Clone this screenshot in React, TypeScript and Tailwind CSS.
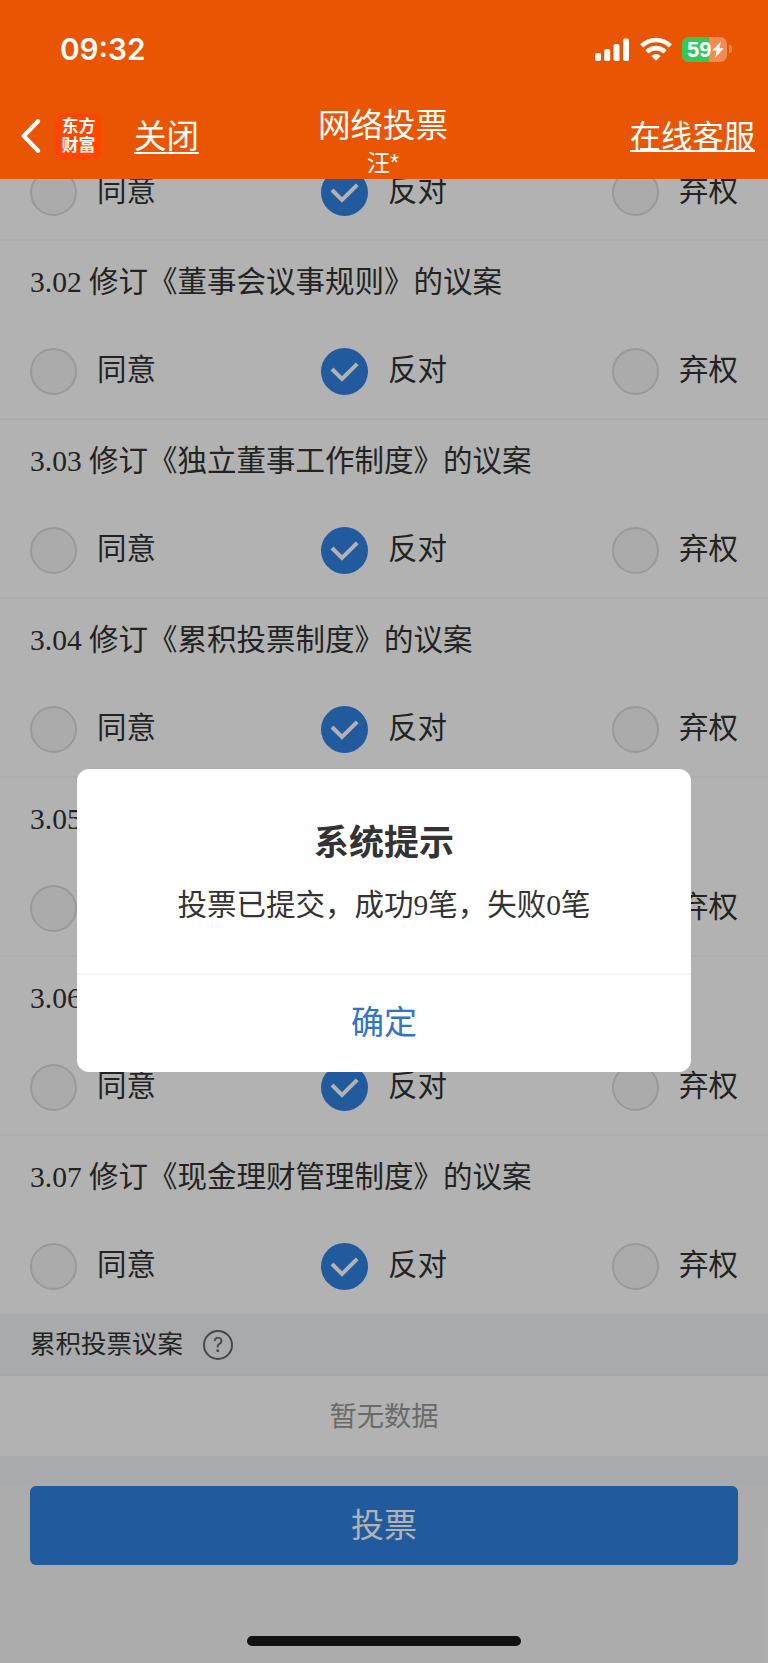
import clsx from 'clsx';

const proposals = [
  { id: '3.02', name: '修订《董事会议事规则》的议案' },
  { id: '3.03', name: '修订《独立董事工作制度》的议案' },
  { id: '3.04', name: '修订《累积投票制度》的议案' },
  { id: '3.05', name: '修订《对外担保制度》的议案' },
  { id: '3.06', name: '修订《关联交易制度》的议案' },
  { id: '3.07', name: '修订《现金理财管理制度》的议案' },
];

const choices = ['同意', '反对', '弃权'];

function StatusBar() {
  return (
    <div className="flex h-[98px] items-center justify-between pl-[60px] pr-[36px]">
      <span className="font-['Inter'] text-[29.7px] font-semibold leading-[98px]">09:32</span>
      <div className="flex items-center">
        <svg width="34" height="23" viewBox="0 0 34 23" fill="white">
          <rect x="0" y="15" width="6" height="8" rx="1.8" />
          <rect x="9.2" y="11" width="6" height="12" rx="1.8" />
          <rect x="18.5" y="6" width="6" height="17" rx="1.8" />
          <rect x="28" y="0.5" width="6" height="22.5" rx="1.8" />
        </svg>
        <svg className="-mt-px ml-[11px]" width="32" height="24" viewBox="0 0 32 24" fill="none" stroke="white" strokeWidth="4.6">
          <path d="M1.6 8.8a20.6 20.6 0 0 1 28.8 0" />
          <path d="M7 14.8a12.8 12.8 0 0 1 18 0" />
          <path d="M11.3 19a6.6 6.6 0 0 1 9.4 0L16 23.8Z" fill="white" stroke="none" />
        </svg>
        {/* Battery */}
        <div className="relative ml-[10px] flex h-[25px] w-[45px] items-center overflow-hidden rounded-[7px] bg-[#f28a54]">
          <div className="absolute inset-y-0 left-0 w-[27px] bg-[#34c759]" />
          <span className="relative ml-[5px] font-['Liberation_Sans'] text-[22px] font-bold leading-[25px]">59</span>
          <svg className="relative ml-px" width="12" height="17" viewBox="0 0 12 17" fill="white">
            <path d="M9 0.4 0.3 9.6h4.5L3 16.8 11.8 7.2H7.2Z" />
          </svg>
        </div>
        <div className="ml-[2px] h-[8px] w-[3px] rounded-r-full bg-[#f28a54]" />
      </div>
    </div>
  );
}

function NavBar() {
  return (
    <div className="relative flex h-[81px] justify-between pl-[21px] pr-[13px]">
      <div className="flex h-[76px] items-center">
        <svg width="20" height="34" viewBox="0 0 20 34" fill="none" stroke="white" strokeWidth="4.3" strokeLinecap="round" strokeLinejoin="round">
          <path d="M17 2.2 2.8 17 17 31.8" />
        </svg>
        <div className="ml-[14px] flex h-[47px] w-[47px] flex-col items-center justify-center rounded-[9px] bg-[#ff4500] text-[17px] font-bold leading-[19px]">
          <span>东方</span>
          <span>财富</span>
        </div>
        <a className="ml-[32px] h-[36px] border-b-2 border-white text-[32.5px] leading-[38px]">关闭</a>
      </div>
      <div className="absolute inset-x-0 top-0 flex flex-col items-center pr-[2px]">
        <h1 className="text-[32.5px] leading-[56px]">网络投票</h1>
        <span className="text-[23px] leading-[18px]">汪*</span>
      </div>
      <div className="flex h-[76px] items-center">
        <a className="-mt-px h-[33px] border-b-2 border-white text-[31.3px] leading-[38px]">在线客服</a>
      </div>
    </div>
  );
}

function Options() {
  return (
    <div className="flex h-[96px] shrink-0 items-center justify-between px-[30px]">
      {choices.map((label) => {
        const checked = label === '反对';
        return (
          <label key={label} className="flex items-center">
            <span
              className={clsx(
                'h-[47px] w-[47px] rounded-full',
                checked ? 'bg-[#3181e2]' : 'border-2 border-[#dcdcdc] bg-[#f5f5f5]'
              )}
            >
              {checked && (
                <svg width="47" height="47" viewBox="0 0 47 47" fill="none" stroke="white" strokeWidth="4">
                  <path d="M11 21 21 31 36.2 15.8" />
                </svg>
              )}
            </span>
            <span className="ml-[20px] pb-[3px] text-[29.5px] leading-[40px]">{label}</span>
          </label>
        );
      })}
    </div>
  );
}

export default function App() {
  return (
    <div className="relative flex h-[1663px] w-[768px] flex-col overflow-hidden bg-[#f7f7f7] font-['Liberation_Sans','Noto_Sans_CJK_SC',sans-serif] text-[#333]">
      <header className="h-[179px] shrink-0 bg-[#ea5503] text-white">
        <StatusBar />
        <NavBar />
      </header>

      <main className="flex flex-col bg-white">
        {/* Row scrolled under the header */}
        <div className="flex h-[62px] flex-col justify-end overflow-hidden border-b-2 border-[#f5f5f5]">
          <div className="-mb-px">
            <Options />
          </div>
        </div>
        {proposals.map((item) => (
          <section key={item.id} className="h-[179px] border-b-2 border-[#f7f7f7]">
            <h2 className="h-[82px] whitespace-pre px-[30px] font-['Liberation_Serif','Noto_Sans_CJK_SC',serif] text-[29.5px] leading-[82px]">
              {item.id} {item.name}
            </h2>
            <Options />
          </section>
        ))}
        <div className="flex h-[61px] items-center border-b-2 border-[#f0f0f1] bg-[#f3f4f6] pl-[30px]">
          <span className="pb-[2px] text-[25.5px] leading-[40px]">累积投票议案</span>
          <span className="ml-[20px] flex h-[30px] w-[30px] items-center justify-center rounded-full border-2 border-[#666] font-['Inter'] text-[20px] leading-none text-[#666]">
            ?
          </span>
        </div>
        <p className="h-[80px] text-center text-[27.3px] leading-[81px] text-[#999]">暂无数据</p>
        <div className="h-[30px] bg-[#f3f4f6]" />
      </main>

      <button className="mx-[30px] h-[79px] shrink-0 rounded-[6px] bg-[#3181e2] text-[33px] leading-[80px] text-white">
        投票
      </button>

      {/* Dialog */}
      <div className="absolute inset-x-0 bottom-0 top-[179px] flex items-center justify-center bg-black/30">
        <div className="-mt-[2px] flex h-[303px] w-[614px] flex-col rounded-[12px] bg-white text-center">
          <div className="h-[206px] border-b-2 border-[#f5f5f5] pt-[48px]">
            <h3 className="text-[35px] font-bold leading-[52px]">系统提示</h3>
            <p className="mt-[14px] font-['Liberation_Serif','Noto_Sans_CJK_SC',serif] text-[29.5px] leading-[44px]">
              投票已提交，成功9笔，失败0笔
            </p>
          </div>
          <button className="flex-1 text-[33px] text-[#3074c8]">确定</button>
        </div>
      </div>

      <div className="absolute bottom-[17px] left-[247px] h-[10px] w-[274px] rounded-full bg-[#121212]" />
    </div>
  );
}
